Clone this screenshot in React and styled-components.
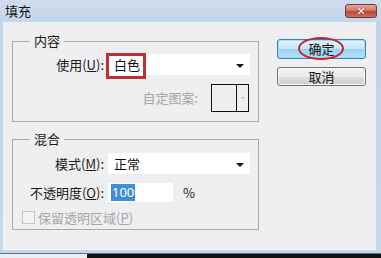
import React from "react";
import styled, { createGlobalStyle } from "styled-components";

const Global = createGlobalStyle`
  html, body { margin: 0; padding: 0; background: #1b1b1b; }
  body { font-family: "Noto Sans CJK SC", "Noto Sans", sans-serif; }
  * { box-sizing: border-box; }
`;

const Window = styled.div`
  width: 381px;
  height: 258px;
  display: flex;
  flex-direction: column;
  background: linear-gradient(#cfdded, #bfd3e9 30px, #c4daee);
  overflow: hidden;
`;

const TitleBar = styled.div`
  height: 22px;
  display: flex;
  align-items: center;
  justify-content: space-between;
  padding: 0 4px 0 5px;
`;

const Title = styled.span`
  font-size: 13px;
  line-height: 16px;
  color: #111;
`;

const CloseButton = styled.div`
  width: 32px;
  height: 14px;
  border: 1px solid #6b3a3a;
  border-radius: 3px;
  background: linear-gradient(#e8a99b, #d0786a 45%, #bf4536 55%, #cf6f5e);
  display: flex;
  align-items: center;
  justify-content: center;
  color: #fff;
  font-family: "DejaVu Sans", sans-serif;
  font-weight: bold;
  font-size: 11px;
  line-height: 1;
  text-shadow: 0 0 2px #7a2a22;
`;

const Body = styled.div`
  height: 228px;
  margin: 0 5px 0 3px;
  background: #efeef0;
  border-bottom: 1px solid #f8f8fa;
  display: flex;
  padding: 0 0 0 9px;
  gap: 18px;
`;

const FrameBottom = styled.div`
  height: 4px;
  background: #bfd8ea;
  border-bottom: 1px solid #5c7487;
`;

const Desktop = styled.div`
  flex: 1;
  display: flex;
  background: #121212;
`;

const DesktopLight = styled.div`
  width: 87px;
  background: #e9eef1;
`;

const LeftColumn = styled.div`
  width: 247px;
  display: flex;
  flex-direction: column;
  gap: 9px;
  padding-top: 11px;
`;

const Group = styled.fieldset`
  margin: 0;
  border: 1px solid #a9a9ac;
  padding: ${(p) => p.$pad};
  display: flex;
  flex-direction: column;
  gap: ${(p) => p.$gap || "9px"};
  min-width: 0;
`;

const Legend = styled.legend`
  margin-left: 17px;
  padding: 0 4px;
  font-size: 13px;
  line-height: 16px;
  color: #1a1a1a;
`;

const Row = styled.div`
  display: flex;
  align-items: center;
  height: ${(p) => p.$h || "21px"};
  justify-content: ${(p) => (p.$end ? "flex-end" : "flex-start")};
  gap: ${(p) => p.$gap || "4px"};
  padding-right: ${(p) => p.$pr || "0"};
  padding-left: ${(p) => p.$pl || "0"};
`;

const Label = styled.span`
  width: 91px;
  text-align: right;
  font-size: 13px;
  line-height: 16px;
  color: ${(p) => (p.$muted ? "#a6a6a8" : "#1a1a1a")};
  white-space: nowrap;
`;

const Plain = styled.span`
  font-size: 13px;
  line-height: 16px;
  color: ${(p) => (p.$muted ? "#a6a6a8" : "#1a1a1a")};
  margin-left: ${(p) => p.$ml || "0"};
  white-space: nowrap;
`;

const U = styled.span`
  text-decoration: underline;
`;

const Select = styled.div`
  position: relative;
  width: 142px;
  height: 21px;
  background: #fff;
  display: flex;
  align-items: center;
  justify-content: space-between;
  padding: 0 6px 0 6px;
  font-size: 13px;
  color: #111;
`;

const Arrow = styled.span`
  width: 0;
  height: 0;
  border-left: 4px solid transparent;
  border-right: 4px solid transparent;
  border-top: 4px solid #111;
  margin-top: 2px;
`;

const RedBox = styled.div`
  position: absolute;
  left: -2px;
  top: -1px;
  width: 40px;
  height: 26px;
  border: 3px solid #bf2f33;
  pointer-events: none;
`;

const Swatch = styled.div`
  width: 38px;
  height: 28px;
  border: 1px solid #111;
  display: flex;
  background: #efeef0;
`;

const SwatchMain = styled.div`
  width: 25px;
  border-right: 1px solid #111;
`;

const SwatchArrow = styled.div`
  flex: 1;
  display: flex;
  align-items: center;
  justify-content: center;
  &::after {
    content: "";
    border-left: 2px solid transparent;
    border-right: 2px solid transparent;
    border-top: 2px solid #b8b8b8;
  }
`;

const TextInput = styled.div`
  width: 65px;
  height: 19px;
  background: #fff;
  display: flex;
  align-items: center;
  padding-left: 3px;
`;

const Selected = styled.span`
  background: #3f8fd8;
  color: #fff;
  font-family: "Noto Sans", sans-serif;
  font-size: 13px;
  line-height: 17px;
  padding: 0 1px;
`;

const Checkbox = styled.span`
  width: 13px;
  height: 13px;
  border: 1px solid #c4c4c6;
  background: #f4f4f5;
`;

const RightColumn = styled.div`
  width: 89px;
  display: flex;
  flex-direction: column;
  gap: 8px;
  padding-top: 17px;
`;

const Button = styled.div`
  position: relative;
  height: ${(p) => (p.$primary ? "20px" : "19px")};
  border: 1px solid ${(p) => (p.$primary ? "#3c7fb1" : "#707070")};
  border-radius: 3px;
  background: ${(p) =>
    p.$primary
      ? "linear-gradient(#e5f4fc, #c4e5f6 50%, #98d1ef 51%, #b3e0f9)"
      : "linear-gradient(#f2f2f2, #ebebeb 50%, #dddddd 51%, #cfcfcf)"};
  box-shadow: ${(p) => (p.$primary ? "inset 0 0 0 1px #9ee0fa" : "inset 0 0 0 1px #fcfcfc")};
  display: flex;
  align-items: center;
  justify-content: center;
  font-size: 13px;
  line-height: 16px;
  color: #111;
`;

const RedEllipse = styled.div`
  position: absolute;
  left: 20px;
  top: -3px;
  width: 46px;
  height: 23px;
  border: 2.5px solid #c8232c;
  border-radius: 50%;
  pointer-events: none;
`;

export default function App() {
  return (
    <>
      <Global />
      <Window>
        <TitleBar>
          <Title>填充</Title>
          <CloseButton>✕</CloseButton>
        </TitleBar>
        <Body>
          <LeftColumn>
            <Group $pad="5px 8px 9px 0">
              <Legend>内容</Legend>
              <Row>
                <Label>
                  使用(<U>U</U>):
                </Label>
                <Select>
                  <span>白色</span>
                  <Arrow />
                  <RedBox />
                </Select>
              </Row>
              <Row $h="28px" $end $gap="13px" $pr="1px">
                <Plain $muted>自定图案:</Plain>
                <Swatch>
                  <SwatchMain />
                  <SwatchArrow />
                </Swatch>
              </Row>
            </Group>
            <Group $pad="6px 8px 5px 0" $gap="9px">
              <Legend>混合</Legend>
              <Row>
                <Label>
                  模式(<U>M</U>):
                </Label>
                <Select>
                  <span>正常</span>
                  <Arrow />
                </Select>
              </Row>
              <Row $h="19px">
                <Label>
                  不透明度(<U>O</U>):
                </Label>
                <TextInput>
                  <Selected>100</Selected>
                </TextInput>
                <Plain $ml="6px">%</Plain>
              </Row>
              <Row $h="13px" $pl="9px" $gap="3px">
                <Checkbox />
                <Plain $muted>
                  保留透明区域(<U>P</U>)
                </Plain>
              </Row>
            </Group>
          </LeftColumn>
          <RightColumn>
            <Button $primary>
              确定
              <RedEllipse />
            </Button>
            <Button>取消</Button>
          </RightColumn>
        </Body>
        <FrameBottom />
        <Desktop>
          <DesktopLight />
        </Desktop>
      </Window>
    </>
  );
}
